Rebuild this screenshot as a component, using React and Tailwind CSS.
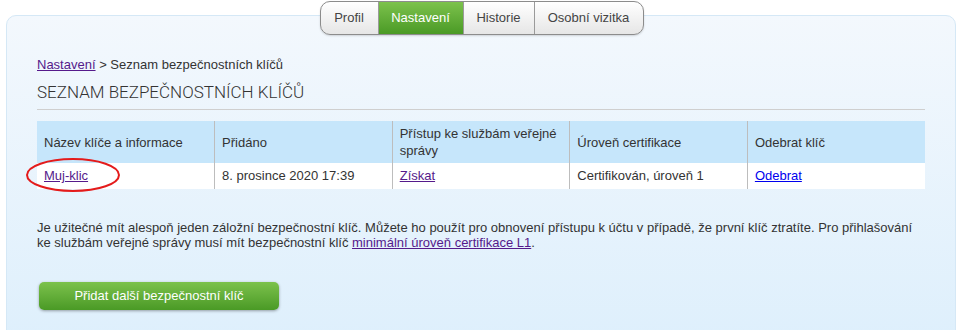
import React from 'react';

const font = { fontFamily: '"Liberation Sans", Arial, sans-serif' };

const tabs = [
  { label: 'Profil', w: 'w-[57px]' },
  { label: 'Nastavení', w: 'w-[85px]', active: true },
  { label: 'Historie', w: 'w-[71px]' },
  { label: 'Osobní vizitka', w: 'w-[109px]' },
];

function Tabs() {
  return (
    <nav className="absolute left-1/2 top-[1px] z-10 flex h-[34px] -translate-x-1/2 overflow-hidden rounded-[10px] border border-[#8c8c8c] bg-gradient-to-b from-white to-[#e6e6e6] shadow-[0_1px_2px_rgba(0,0,0,0.15)]">
      {tabs.map((t, i) => (
        <a
          key={t.label}
          className={
            'flex items-center justify-center text-[13px] ' +
            t.w +
            (i > 0 ? ' border-l border-[#9a9a9a]' : '') +
            (t.active
              ? ' bg-gradient-to-b from-[#7cc24c] to-[#4a9a25] text-white'
              : ' text-[#444]')
          }
        >
          {t.label}
        </a>
      ))}
    </nav>
  );
}

function KeyTable() {
  const th = 'border-l border-[#bdbdbd] px-[7px] py-[4px] text-left align-middle font-normal leading-[17px] first:border-l-0 h-[42px]';
  const td = 'border-l border-[#bdbdbd] px-[7px] py-[4px] leading-[18px] first:border-l-0';
  return (
    <div className="relative mt-[11px]">
      <table className="w-full table-fixed border-collapse text-[13px] text-[#333]">
        <thead>
          <tr className="bg-[#c6e6fb]">
            <th className={th}>Název klíče a informace</th>
            <th className={th}>Přidáno</th>
            <th className={th}>Přístup ke službám veřejné správy</th>
            <th className={th}>Úroveň certifikace</th>
            <th className={th}>Odebrat klíč</th>
          </tr>
        </thead>
        <tbody>
          <tr className="bg-white">
            <td className={td}>
              <a className="text-[#551a8b] underline">Muj-klic</a>
            </td>
            <td className={td}>8. prosince 2020 17:39</td>
            <td className={td}>
              <a className="text-[#551a8b] underline">Získat</a>
            </td>
            <td className={td}>Certifikován, úroveň 1</td>
            <td className={td}>
              <a className="text-[#0000ee] underline">Odebrat</a>
            </td>
          </tr>
        </tbody>
      </table>
      <svg className="pointer-events-none absolute left-[-12px] top-[36px]" width="96" height="36" viewBox="0 0 96 36">
        <ellipse cx="48" cy="18" rx="46" ry="16" fill="none" stroke="#e41b1b" strokeWidth="2" />
      </svg>
    </div>
  );
}

export default function App() {
  return (
    <div className="relative h-[330px] w-[963px] overflow-hidden bg-white" style={font}>
      <Tabs />
      <div className="pt-[15px] pl-[6px] pr-[7px]">
        <section className="h-[340px] rounded-[10px] border border-[#d5e8f6] bg-gradient-to-b from-[#f3f8fd] to-[#ddeffc] pl-[30px] pr-[30px] pt-[40px] text-[#333]">
          <p className="text-[13px] leading-[18px]">
            <a className="text-[#551a8b] underline">Nastavení</a> &gt; Seznam bezpečnostních klíčů
          </p>
          <h1
            className="mt-[6px] border-b border-[#cfcfcf] pb-[5px] text-[17px] font-light uppercase leading-[24px] text-[#333]"
            style={{ fontFamily: 'Roboto, "Liberation Sans", sans-serif' }}
          >
            Seznam bezpečnostních klíčů
          </h1>
          <KeyTable />
          <p className="mt-[31px] text-[13px] leading-[15px]">
            Je užitečné mít alespoň jeden záložní bezpečnostní klíč. Můžete ho použít pro obnovení přístupu k účtu v případě, že první klíč ztratíte. Pro přihlašování ke službám veřejné správy musí mít bezpečnostní klíč{' '}
            <a className="text-[#551a8b] underline">minimální úroveň certifikace L1</a>.
          </p>
          <button className="ml-[2px] mt-[32px] h-[28px] w-[240px] rounded-[5px] bg-gradient-to-b from-[#7cc24c] to-[#4a9a25] text-[13px] text-white shadow-[0_1px_3px_rgba(0,0,0,0.35)]">
            Přidat další bezpečnostní klíč
          </button>
        </section>
      </div>
    </div>
  );
}
